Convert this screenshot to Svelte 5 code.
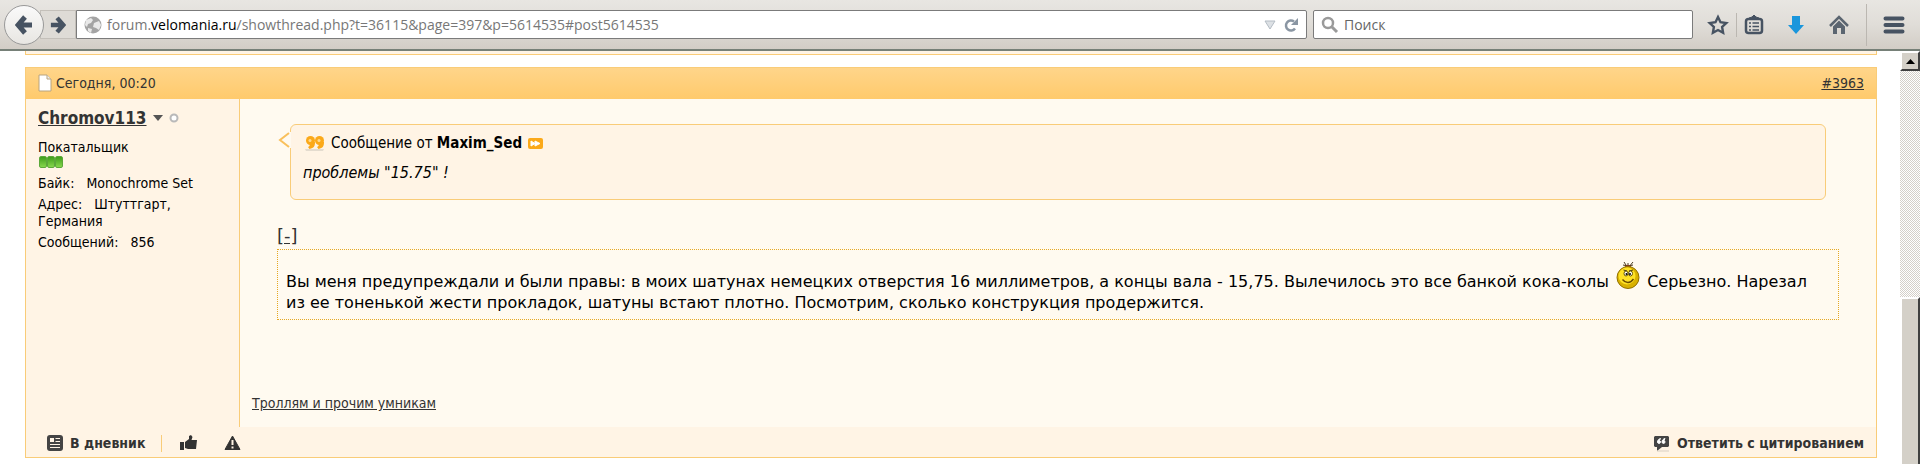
<script lang="ts">
  const profile = [
    { label: "Байк:", value: "Monochrome Set" },
    { label: "Адрес:", value: "Штуттгарт, Германия" },
    { label: "Сообщений:", value: "856" },
  ];

  let spoilerOpen = $state(true);
</script>

<div class="browser">
  <header class="toolbar">
    <div class="nav">
      <button class="back" aria-label="Назад">
        <svg width="18" height="20" viewBox="0 0 18 20">
          <path d="M10 2 3 10l7 8M4 10h13" fill="none" stroke="#475362" stroke-width="5" />
        </svg>
      </button>
      <button class="forward" aria-label="Вперёд">
        <svg width="16" height="18" viewBox="0 0 18 20">
          <path d="M8 2l7 8-7 8M1 10h13" fill="none" stroke="#475362" stroke-width="5" />
        </svg>
      </button>
      <div class="urlbar">
        <svg width="18" height="18" viewBox="0 0 18 18">
          <circle cx="9" cy="9" r="8.5" fill="#a4a4a4" />
          <path d="M2 4l5-2 2 2-2 3-3 1-1 3-2-2zM10 7l5-2 2 4-2 5-3-2-3-1zM4 12l4 1-1 4-3-2z" fill="#e9e9e9" />
        </svg>
        <a class="url" href="#post5614535">forum.<b>velomania.ru</b>/showthread.php?t=36115&amp;page=397&amp;p=5614535#post5614535</a>
        <button class="bare" aria-label="Журнал">
          <svg width="12" height="10" viewBox="0 0 12 10">
            <path d="M1 1h10L6 9z" fill="#dde1e5" stroke="#b4bcc4" />
          </svg>
        </button>
        <button class="bare" aria-label="Обновить">
          <svg width="15" height="16" viewBox="0 0 15 16">
            <path d="M10 4.5A5 5 0 1 0 11 11.5" fill="none" stroke="#8a96a3" stroke-width="2.5" />
            <path d="M14 1v7H7z" fill="#8a96a3" />
          </svg>
        </button>
      </div>
    </div>
    <label class="search">
      <svg width="18" height="18" viewBox="0 0 18 18">
        <circle cx="7" cy="7" r="5" fill="none" stroke="#9a9a9a" stroke-width="2.5" />
        <path d="M11 11l5 5" stroke="#9a9a9a" stroke-width="3" />
      </svg>
      <input type="text" placeholder="Поиск" aria-label="Поиск" />
    </label>
    <div class="tools">
      <button class="bare" aria-label="Добавить в закладки">
        <svg width="22" height="22" viewBox="0 0 22 22">
          <path d="M11 3l2.500 5.200 5.800.8-4.200 4 1 5.700L11 16l-5.100 2.700 1-5.700-4.200-4 5.800-.8z" fill="none" stroke="#475362" stroke-width="2.4" />
        </svg>
      </button>
      <span class="split short"></span>
      <button class="bare" aria-label="Закладки">
        <svg width="20" height="22" viewBox="0 0 20 22">
          <rect x="2" y="5" width="16" height="14" rx="2.5" fill="none" stroke="#475362" stroke-width="2.5" />
          <path d="M5 5V4l3-1 2-2 2 2 3 1v1z" fill="#475362" stroke="#475362" />
          <path d="M5 9h2M8.500 9H15M5 12.500h2M8.500 12.500H15M5 16h2M8.500 16H15" stroke="#475362" stroke-width="1.600" />
        </svg>
      </button>
      <button class="bare" aria-label="Загрузки">
        <svg width="20" height="22" viewBox="0 0 20 22">
          <path d="M6 2h8v9h4l-8 9-8-9h4z" fill="#1a96dc" />
        </svg>
      </button>
      <button class="bare" aria-label="Домой">
        <svg width="22" height="22" viewBox="0 0 22 22">
          <path d="M2 12 11 3l9 9" fill="none" stroke="#5b6570" stroke-width="2.500" />
          <path d="M5 12.500l6-6 6 6V20h-4v-6H9v6H5z" fill="#5b6570" />
        </svg>
      </button>
      <span class="split"></span>
      <button class="bare" aria-label="Меню">
        <svg width="22" height="20" viewBox="0 0 22 20">
          <path d="M2.500 3.500h17M2.500 10h17M2.500 16.500h17" stroke="#475362" stroke-width="4" stroke-linecap="round" />
        </svg>
      </button>
    </div>
  </header>

  <div class="viewport">
    <main>
      <div class="previous"></div>
      <article class="post">
        <div class="posthead">
          <span class="date">
            <svg width="14" height="18" viewBox="0 0 14 18">
              <path d="M1 1h8l4 4v12H1z" fill="#fff" stroke="#b9a47f" />
              <path d="M9 1v4h4" fill="#eee" stroke="#b9a47f" />
            </svg>
            Сегодня, 00:20
          </span>
          <a href="#post5614535">#3963</a>
        </div>

        <div class="columns">
          <aside>
            <div class="user">
              <a href="#Chromov113">Chromov113</a>
              <svg width="10" height="6" viewBox="0 0 10 6"><path d="M0 0h10L5 6z" fill="#555" /></svg>
              <svg class="status" width="10" height="10" viewBox="0 0 10 10">
                <circle cx="5" cy="5" r="3.5" fill="#fff" stroke="#b9b9b9" stroke-width="2" />
              </svg>
            </div>
            <div class="rank">Покатальщик</div>
            <div class="reputation"><i></i><i></i><i></i></div>
            <dl>
              {#each profile as row}
                <div>
                  <dt>{row.label}</dt>
                  <dd>{row.value}</dd>
                </div>
              {/each}
            </dl>
          </aside>

          <section class="content">
            <blockquote>
              <svg class="pointer" width="13" height="18" viewBox="0 0 13 18">
                <path d="M12 1v16h1V1z" fill="#fffaf0" />
                <path d="M11 2 2 9l9 7" fill="none" stroke="#f9c05c" stroke-width="2" />
              </svg>
              <div class="quoted">
                <svg width="20" height="16" viewBox="0 0 20 16">
                  <path d="M0 14h19l-1 2H1z" fill="#e4dccf" />
                  <g fill="#fba919">
                    <circle cx="5.5" cy="5.5" r="4.500" />
                    <circle cx="14.5" cy="5.5" r="4.500" />
                    <path d="M4 7h6c0 4-1 6-5.500 7L3 12c1.500-.5 2.500-2 1-5zM13 7h6c0 4-1 6-5.500 7L12 12c1.500-.5 2.500-2 1-5z" />
                  </g>
                  <circle cx="5" cy="5.500" r="1.500" fill="#ffd98f" />
                  <circle cx="14" cy="5.500" r="1.500" fill="#ffd98f" />
                </svg>
                <span>Сообщение от <strong>Maxim_Sed</strong></span>
                <a class="jump" href="#quoted" aria-label="Просмотр сообщения">
                  <svg width="15" height="11" viewBox="0 0 15 11">
                    <rect width="15" height="11" rx="2" fill="#fba919" />
                    <path d="M3 3l4 2.500V3l5 2.500L7 8V5.500L3 8z" fill="#fff" stroke="#fff" />
                  </svg>
                </a>
              </div>
              <p>проблемы "15.75" !</p>
            </blockquote>

            <button class="toggle" aria-expanded={spoilerOpen} onclick={() => (spoilerOpen = !spoilerOpen)}>
              {spoilerOpen ? "[-]" : "[+]"}
            </button>
            {#if spoilerOpen}
              <div class="spoiler">
                Вы меня предупреждали и были правы: в моих шатунах немецких отверстия 16 миллиметров, а концы вала - 15,75. Вылечилось это все банкой кока-колы
                <svg class="smiley" width="24" height="28" viewBox="0 0 24 28" role="img" aria-label="улыбка">
                  <path d="M12 7 8 1M12 7V2M12 7l5-6M12 5 7 4M12 5l5-1" stroke="#4a3a20" />
                  <ellipse cx="12" cy="5.500" rx="3" ry="1.500" fill="#8a3c20" />
                  <circle cx="12" cy="16.500" r="11" fill="#d9b100" stroke="#917000" />
                  <circle cx="11" cy="15" r="8.500" fill="#ffe226" />
                  <path d="M7.500 9l3.500 1M17 9l-4 1" stroke="#4a3a10" />
                  <ellipse cx="10" cy="12.500" rx="2" ry="2.500" fill="#fff" stroke="#665500" />
                  <ellipse cx="14.500" cy="12.500" rx="2" ry="2.500" fill="#fff" stroke="#665500" />
                  <circle cx="10.500" cy="13" r="1" />
                  <circle cx="14" cy="13" r="1" />
                  <path d="M6.500 18.500c3 4 8 4 11-.5" fill="none" stroke="#6b4c00" stroke-width="1.400" />
                </svg>
                Серьезно. Нарезал из ее тоненькой жести прокладок, шатуны встают плотно. Посмотрим, сколько конструкция продержится.
              </div>
            {/if}

            <a class="signature" href="#trolls">Троллям и прочим умникам</a>
          </section>
        </div>

        <footer>
          <a href="#blog">
            <svg width="16" height="16" viewBox="0 0 16 16">
              <rect width="16" height="16" rx="3" fill="#444" />
              <path d="M3 3h4v4H3z" fill="#fff4e5" />
              <path d="M8.500 3.500H13M8.500 6.500H13M3 9.500h10M3 12.500h10" stroke="#fff4e5" stroke-width="1.200" />
            </svg>
            В дневник
          </a>
          <span class="divider"></span>
          <a class="icon" href="#like" aria-label="Спасибо">
            <svg width="17" height="16" viewBox="0 0 17 16">
              <path d="M0 7h4v8H0zM5 7l4-3V1l2-1 1.500 2-1 3H17l-1 9H8l-3-1z" fill="#333" />
            </svg>
          </a>
          <a class="icon" href="#report" aria-label="Пожаловаться">
            <svg width="17" height="16" viewBox="0 0 17 16">
              <path d="M8.500 1 16 14.500H1z" fill="#333" stroke="#333" stroke-linejoin="round" />
              <path d="M8.500 5v5M8.500 11.500v2" stroke="#fff4e5" stroke-width="2" />
            </svg>
          </a>
          <a class="reply" href="#reply">
            <svg width="17" height="17" viewBox="0 0 17 17">
              <path d="M2 1h13l1 1v9l-1 1H9l-5 4v-4H2l-1-1V2z" fill="#444" />
              <path d="M4 16h12" stroke="#d9cfc2" />
              <path d="M7.500 3.500c-2 .5-3 2-3 3.500a1.500 1.500 0 1 0 2-1.500zM12 3.500c-2 .5-3 2-3 3.500a1.500 1.500 0 1 0 2-1.500z" fill="#fff" stroke="#fff" />
            </svg>
            Ответить с цитированием
          </a>
        </footer>
      </article>
    </main>

    <div class="scrollbar">
      <button aria-label="Прокрутить вверх">
        <svg width="9" height="5" viewBox="0 0 9 5"><path d="M4.500 0 9 5H0z" /></svg>
      </button>
      <div class="thumb"></div>
    </div>
  </div>
</div>

<style>
  :global(body) {
    margin: 0;
    background: #fff;
  }

  .browser {
    display: flex;
    flex-direction: column;
    height: 100vh;
    overflow: hidden;
    box-sizing: border-box;
    font-family: "DejaVu Sans Condensed", "Open Sans", sans-serif;
    font-size: 14px;
    line-height: 18px;
    color: #000;
  }

  svg {
    flex: none;
  }

  a {
    color: #333;
  }

  button {
    font: inherit;
    cursor: pointer;
  }

  .toolbar {
    display: flex;
    flex: none;
    align-items: center;
    box-sizing: border-box;
    height: 51px;
    padding: 0 15px 0 4px;
    background: linear-gradient(#e8e6e2, #e0ddd8 50%, #d2cdc6);
    border-bottom: 2px solid #768078;
    font-family: "Open Sans", sans-serif;
  }

  .nav {
    display: flex;
    flex: 1;
    align-items: center;
  }

  .back {
    display: grid;
    place-items: center;
    box-sizing: border-box;
    width: 40px;
    height: 40px;
    padding: 0;
    border: 1px solid #999;
    border-radius: 50%;
    background: linear-gradient(#fafafa, #e8e6e2);
    z-index: 1;
  }

  .forward {
    display: grid;
    place-items: center;
    box-sizing: border-box;
    width: 36px;
    height: 29px;
    margin-left: -4px;
    padding: 0;
    border: 1px solid #c4c0ba;
    background: #dedbd6;
  }

  .urlbar,
  .search {
    display: flex;
    align-items: center;
    box-sizing: border-box;
    height: 29px;
    padding: 0 7px;
    gap: 5px;
    border: 1px solid #7b7b7b;
    background: #fff;
    border-radius: 0 2px 2px 0;
  }

  .urlbar {
    flex: 1;
  }

  .url {
    flex: 1;
    color: #777;
    text-decoration: none;
    white-space: nowrap;
  }

  .url b {
    font-weight: normal;
    color: #000;
  }

  .bare {
    display: grid;
    place-items: center;
    padding: 0;
    border: 0;
    background: none;
  }

  .urlbar .bare + .bare {
    margin-left: 3px;
  }

  .search {
    width: 380px;
    margin: 0 14px 0 6px;
    border-radius: 2px;
  }

  .search input {
    flex: 1;
    min-width: 0;
    padding: 0;
    border: 0;
    outline: 0;
    font: inherit;
    background: none;
  }

  .search input::placeholder {
    color: #666;
    opacity: 1;
  }

  .tools {
    display: flex;
    align-items: center;
    gap: 22px;
  }

  .split {
    width: 1px;
    height: 42px;
    margin: 0 -6px;
    background: #bbb7b1;
  }

  .split.short {
    height: 24px;
    margin: 0 -15px;
  }

  .viewport {
    display: flex;
    flex: 1;
    min-height: 0;
  }

  main {
    flex: 1;
    padding: 0 23px 0 25px;
  }

  .previous {
    height: 3px;
    margin-bottom: 12px;
    border: 1px solid #f9cc78;
    border-top: 0;
    background: #fff4e5;
  }

  .post {
    border: 1px solid #f9cc78;
    background: #fff4e5;
  }

  .posthead {
    display: flex;
    justify-content: space-between;
    align-items: flex-start;
    padding: 6px 12px 7px;
    background: linear-gradient(#ffd58a, #ffca6c);
    color: #333;
  }

  .date {
    display: flex;
    align-items: center;
    gap: 4px;
  }

  .columns {
    display: flex;
    align-items: stretch;
  }

  aside {
    box-sizing: border-box;
    width: 214px;
    padding: 8px 12px;
    border-right: 1px solid #f9cc78;
  }

  .user {
    display: flex;
    align-items: center;
    gap: 6px;
    font-size: 17px;
    line-height: 22px;
    font-weight: bold;
  }

  .rank {
    margin-top: 9px;
    line-height: 18px;
  }

  .reputation {
    display: flex;
    padding: 0 0 0 1px;
  }

  .reputation i {
    width: 6px;
    height: 10px;
    border: 1px solid #5ca83a;
    border-radius: 2px;
    background: linear-gradient(#3f9e1c, #86d64c);
  }

  dl {
    margin: 7px 0 0;
    line-height: 17px;
  }

  dl div {
    margin-bottom: 4px;
  }

  dt,
  dd {
    display: inline;
    margin: 0;
  }

  dt {
    margin-right: 8px;
  }

  .content {
    flex: 1;
    padding: 25px 37px 15px;
    background: #fffaf0;
  }

  blockquote {
    position: relative;
    margin: 0 13px;
    padding: 9px 12px 16px;
    border: 1px solid #f9cc78;
    border-radius: 6px;
    background: #fff4e5;
  }

  .pointer {
    position: absolute;
    top: 6px;
    left: -13px;
  }

  .quoted {
    display: flex;
    align-items: center;
    gap: 6px;
    padding-left: 2px;
    font-size: 15px;
  }

  .quoted svg {
    display: block;
  }

  blockquote p {
    margin: 11px 0 0;
    font-size: 16px;
    line-height: 20px;
    font-style: italic;
  }

  .toggle {
    display: block;
    margin: 26px 0 3px;
    padding: 0;
    border: 0;
    background: none;
    color: #333;
    font-family: "DejaVu Sans", sans-serif;
    font-size: 18px;
    line-height: 20px;
    text-decoration: underline;
  }

  .spoiler {
    padding: 11px 24px 6px 8px;
    border: 1px dotted #e5a823;
    font-family: "DejaVu Sans", sans-serif;
    font-size: 16px;
    line-height: 21px;
  }

  .smiley {
    margin: 0 2px;
    vertical-align: -2px;
  }

  .signature {
    display: inline-block;
    margin: 74px 0 0 -25px;
  }

  footer {
    display: flex;
    align-items: center;
    padding: 7px 12px 5px 21px;
    font-weight: bold;
  }

  footer a {
    display: flex;
    align-items: center;
    gap: 7px;
    text-decoration: none;
  }

  .divider {
    width: 1px;
    height: 17px;
    margin: 0 18px 0 16px;
    background: #f9cc78;
  }

  .icon {
    margin-right: 27px;
  }

  .reply {
    margin-left: auto;
  }

  .scrollbar {
    flex: none;
    width: 20px;
    background: repeating-conic-gradient(#d4d0c8 0 25%, #fff 0 50%) 0 0 / 2px 2px;
  }

  .scrollbar button {
    display: grid;
    place-items: center;
    box-sizing: border-box;
    width: 20px;
    height: 20px;
    padding: 0;
    border: 2px solid;
    border-color: #fff #404040 #404040 #fff;
    background: #d4d0c8;
  }

  .thumb {
    box-sizing: border-box;
    height: 200px;
    margin-top: 226px;
    border: 2px solid;
    border-color: #fff #404040 #404040 #fff;
    background: #d4d0c8;
  }
</style>
